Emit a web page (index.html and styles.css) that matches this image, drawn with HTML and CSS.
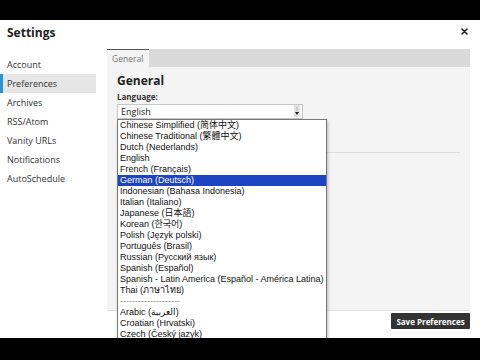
FILE: index.html
```html
<!DOCTYPE html>
<html>
<head>
<meta charset="utf-8">
<link rel="stylesheet" href="styles.css">
</head>
<body>
<div class="screen">
  <div class="bar-top"></div>
  <div class="modal">
    <header class="modal-head">
      <h1>Settings</h1>
      <span class="close"><svg width="7" height="7" viewBox="0 0 7 7"><path d="M1 1L6 6M6 1L1 6" stroke="#222" stroke-width="1.6" stroke-linecap="round"/></svg></span>
    </header>
    <div class="modal-body">
      <nav class="side">
        <a class="side-item">Account</a>
        <a class="side-item active">Preferences</a>
        <a class="side-item">Archives</a>
        <a class="side-item">RSS/Atom</a>
        <a class="side-item">Vanity URLs</a>
        <a class="side-item">Notifications</a>
        <a class="side-item">AutoSchedule</a>
      </nav>
      <section class="main">
        <div class="tabs"><span class="tab">General</span></div>
        <div class="panel">
          <h2>General</h2>
          <div class="label">Language:</div>
          <div class="select-wrap">
            <div class="select">English<span class="arrow"><svg width="6" height="12" viewBox="0 0 6 12"><rect x="0" y="0" width="6" height="12" fill="#e2e2e2"/><path d="M3 2V6" stroke="#bbb" stroke-width="1"/><path d="M1 7H5L3 10Z" fill="#222"/></svg></span></div>
            <ul class="options">
              <li>Chinese Simplified (简体中文)</li>
              <li>Chinese Traditional (繁體中文)</li>
              <li>Dutch (Nederlands)</li>
              <li>English</li>
              <li>French (Français)</li>
              <li class="sel">German (Deutsch)</li>
              <li>Indonesian (Bahasa Indonesia)</li>
              <li>Italian (Italiano)</li>
              <li>Japanese (日本語)</li>
              <li>Korean (한국어)</li>
              <li>Polish (Język polski)</li>
              <li>Português (Brasil)</li>
              <li>Russian (Русский язык)</li>
              <li>Spanish (Español)</li>
              <li>Spanish - Latin America (Español - América Latina)</li>
              <li>Thai (ภาษาไทย)</li>
              <li class="sep">--------------------</li>
              <li>Arabic (العربية)</li>
              <li>Croatian (Hrvatski)</li>
              <li>Czech (Český jazyk)</li>
            </ul>
          </div>
          <hr class="rule">
        </div>
        <div class="footer"><button class="save">Save Preferences</button></div>
      </section>
    </div>
  </div>
  <div class="bar-bottom"></div>
</div>
</body>
</html>
```

FILE: styles.css
```css
html, body {
  margin: 0;
  padding: 0;
  background: #000;
}
body {
  font-family: "Open Sans", "Liberation Sans", sans-serif;
  color: #333;
}
.screen {
  width: 480px;
  height: 360px;
  display: flex;
  flex-direction: column;
  overflow: hidden;
}
.bar-top {
  height: 20px;
  background: #000;
  flex: none;
}
.bar-bottom {
  height: 22px;
  background: #000;
  flex: none;
  position: relative;
  z-index: 5;
}
.modal {
  height: 318px;
  flex: none;
  background: #fff;
  position: relative;
  overflow: hidden;
}
.modal-head {
  height: 29px;
  display: flex;
  justify-content: space-between;
  align-items: flex-start;
}
.modal-head h1 {
  margin: 5px 0 0 7px;
  font-size: 12px;
  line-height: 16px;
  font-weight: 700;
  color: #222;
}
.close {
  margin: 8px 12px 0 0;
  display: flex;
}
.modal-body {
  display: flex;
}
.side {
  width: 96px;
  padding-top: 6px;
  display: flex;
  flex-direction: column;
}
.side-item {
  height: 19px;
  line-height: 19px;
  padding-left: 7px;
  font-size: 9px;
  color: #333;
}
.side-item.active {
  background: #e6e6e6;
  box-shadow: inset 3px 0 0 #2a95d5;
}
.main {
  margin-left: 11px;
  width: 363px;
}
.tabs {
  height: 18px;
  background: #d9d9d9;
  display: flex;
}
.tab {
  width: 37px;
  padding-left: 5px;
  background: #f4f4f4;
  border-top: 1px solid #555;
  font-size: 8.5px;
  line-height: 17px;
  color: #777;
}
.panel {
  height: 243px;
  background: #f4f4f4;
  border-bottom: 1px solid #e0e0e0;
  padding: 0 10px;
  position: relative;
}
.panel h2 {
  margin: 0;
  padding-top: 6px;
  font-size: 12px;
  line-height: 16px;
  font-weight: 700;
  color: #222;
}
.label {
  margin-top: 2px;
  font-size: 8px;
  line-height: 12px;
  font-weight: 700;
  color: #333;
}
.select-wrap {
  position: relative;
  margin-top: 1px;
  width: 186px;
}
.select {
  height: 13px;
  border: 1px solid #c8c8c8;
  background: #fff;
  font-size: 9px;
  line-height: 13px;
  padding-left: 3px;
  color: #222;
  position: relative;
}
.arrow {
  position: absolute;
  right: 2px;
  top: 0;
  display: flex;
}
.options {
  position: absolute;
  left: 0;
  top: 15px;
  width: 208px;
  margin: 0;
  padding: 0;
  list-style: none;
  background: #fff;
  border: 1px solid #777;
  box-shadow: 1px 2px 3px rgba(0,0,0,0.25);
  z-index: 3;
  font-family: "Liberation Sans", "DejaVu Sans", "Noto Sans CJK SC", sans-serif;
  font-size: 9px;
}
.options li {
  height: 11px;
  line-height: 11px;
  padding-left: 2px;
  color: #111;
  white-space: nowrap;
}
.options li.sel {
  background: #1d45c3;
  color: #fff;
}
.options li.sep {
  color: #888;
}
.rule {
  margin: 33px 0 0 0;
  border: 0;
  border-top: 1px solid #ddd;
  width: 343px;
}
.footer {
  display: flex;
  justify-content: flex-end;
  padding-top: 2px;
}
.save {
  height: 16px;
  width: 79px;
  padding: 0;
  border: 0;
  border-radius: 1px;
  background: #333;
  color: #fff;
  font-family: "Open Sans", sans-serif;
  font-weight: 700;
  font-size: 8px;
}
```
